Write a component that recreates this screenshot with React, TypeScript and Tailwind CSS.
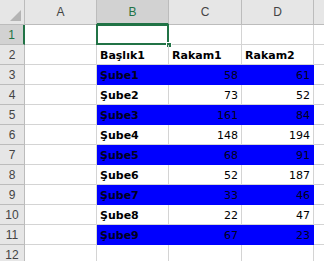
import React from 'react';

const rows: { label: string; c: string; d: string; bold?: boolean; header?: boolean }[] = [
  { label: '', c: '', d: '' },
  { label: 'Başlık1', c: 'Rakam1', d: 'Rakam2', header: true },
  { label: 'Şube1', c: '58', d: '61' },
  { label: 'Şube2', c: '73', d: '52' },
  { label: 'Şube3', c: '161', d: '84' },
  { label: 'Şube4', c: '148', d: '194' },
  { label: 'Şube5', c: '68', d: '91' },
  { label: 'Şube6', c: '52', d: '187' },
  { label: 'Şube7', c: '33', d: '46' },
  { label: 'Şube8', c: '22', d: '47' },
  { label: 'Şube9', c: '67', d: '23' },
  { label: '', c: '', d: '' },
];

const cols = ['A', 'B', 'C', 'D', ''];

export default function App() {
  return (
    <div className="w-[324px] h-[261px] overflow-hidden bg-white" style={{ fontFamily: '"DejaVu Sans", sans-serif' }}>
      <div className="grid grid-cols-[25px_72px_72px_73px_72px_40px] grid-rows-[25px_repeat(12,20px)] w-[354px]">
        {/* corner */}
        <div className="relative bg-[#e6e6e6] border-r border-b border-[#bcbcbc]">
          <svg className="absolute right-[3px] bottom-[3px]" width="11" height="11" viewBox="0 0 11 11">
            <polygon points="11,0 11,11 0,11" fill="#b4b4b4" />
          </svg>
        </div>
        {cols.map((c, i) => (
          <div
            key={i}
            className={
              c === 'B'
                ? 'flex items-center justify-center bg-[#d2d2d2] border-r border-[#bcbcbc] border-b-2 border-b-[#217346] text-[#217346] text-[12px]'
                : 'flex items-center justify-center bg-[#e6e6e6] border-r border-b border-[#bcbcbc] text-[#444] text-[12px]'
            }
            style={{ fontFamily: '"Liberation Sans", sans-serif' }}
          >
            {c}
          </div>
        ))}

        {rows.map((r, i) => {
          const n = i + 1;
          const blue = n >= 3 && n <= 11 && n % 2 === 1;
          const cell = blue
            ? 'flex items-end pb-[3px] px-[3px] bg-[#0000ff] border-r border-b border-[#0000ff] text-[#000020] text-[11px] leading-none'
            : 'flex items-end pb-[3px] px-[3px] border-r border-b border-[#d4d4d4] text-black text-[11px] leading-none';
          return (
            <React.Fragment key={i}>
              <div
                className={
                  n === 1
                    ? 'flex items-center justify-center bg-[#d2d2d2] border-b border-[#bcbcbc] border-r-2 border-r-[#217346] text-[#217346] text-[12px]'
                    : 'flex items-center justify-center bg-[#e6e6e6] border-r border-b border-[#bcbcbc] text-[#444] text-[12px]'
                }
                style={{ fontFamily: '"Liberation Sans", sans-serif' }}
              >
                {n}
              </div>
              <div className="border-r border-b border-[#d4d4d4]" />
              <div className={`${cell} font-bold relative`}>
                {r.label}
                {n === 1 && (
                  <>
                    <div className="absolute left-[-1px] top-[-1px] right-[-1px] bottom-[-1px] border-2 border-[#217346]" />
                    <div className="absolute right-[-4px] bottom-[-4px] w-[6px] h-[6px] bg-[#217346] border border-white" />
                  </>
                )}
              </div>
              <div className={`${cell} ${r.header ? 'font-bold justify-start' : 'justify-end'}`}>{r.c}</div>
              <div className={`${cell} ${r.header ? 'font-bold justify-start' : 'justify-end'}`}>{r.d}</div>
              <div className="border-r border-b border-[#d4d4d4]" />
            </React.Fragment>
          );
        })}
      </div>
    </div>
  );
}
